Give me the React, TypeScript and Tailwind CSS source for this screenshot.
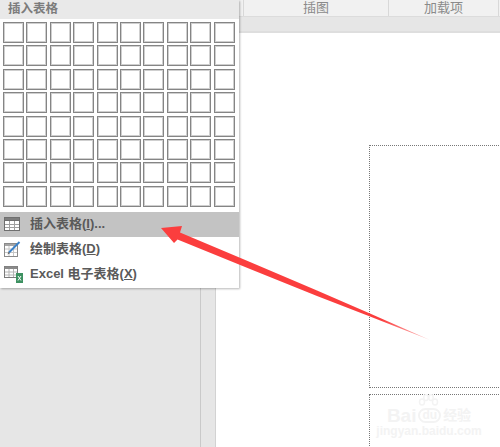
const font = { fontFamily: '"Liberation Sans","Noto Sans CJK SC",sans-serif' };

function TableIcon() {
  return (
    <svg width="17" height="14" viewBox="0 0 17 14" className="shrink-0">
      <rect x="0.5" y="0.5" width="15" height="13" fill="#fff" stroke="#6f6f6f" />
      <rect x="0.5" y="0.5" width="15" height="3" fill="#7d7d7d" stroke="#6f6f6f" />
      <path d="M5.5 4v9M10.5 4v9M1 7.5h14M1 10.5h14" stroke="#a0a0a0" />
    </svg>
  );
}

function DrawIcon() {
  return (
    <svg width="18" height="16" viewBox="0 0 18 16" className="shrink-0">
      <rect x="0.5" y="2.5" width="13" height="13" fill="#fff" stroke="#8a8a8a" />
      <rect x="1" y="3" width="12" height="2" fill="#a5a5a5" />
      <path d="M5 5v10M9.5 5v10M1 8h12M1 11.5h12" stroke="#c6c6c6" />
      <path d="M5 11.5 L15.5 1" stroke="#3b82c9" strokeWidth="2" />
      <path d="M3.5 13.5 L4.5 10.8 L6 12.3 Z" fill="#666" />
    </svg>
  );
}

function ExcelIcon() {
  return (
    <svg width="20" height="17" viewBox="0 0 20 17" className="shrink-0">
      <rect x="0.5" y="0.5" width="13" height="11" fill="#fff" stroke="#7a7a7a" />
      <rect x="0.5" y="0.5" width="13" height="2.5" fill="#8a8a8a" />
      <path d="M5 3v8M9.5 3v8M1 6h12M1 9h12" stroke="#b5b5b5" />
      <rect x="12" y="7" width="7" height="10" fill="#3d9161" />
      <path d="M14 10 L17 14.5 M17 10 L14 14.5" stroke="#fff" strokeWidth="1" />
    </svg>
  );
}

function MenuItem({ icon, label, active }: { icon: React.ReactNode; label: React.ReactNode; active?: boolean }) {
  return (
    <div className={`flex h-[25px] items-center pl-[4px] ${active ? "bg-[#c3c3c3]" : ""}`}>
      <div className="flex w-[26px] shrink-0 items-center">{icon}</div>
      <span className="text-[13px] font-bold text-[#5a5a5a]">{label}</span>
    </div>
  );
}

const rows = Array.from({ length: 8 });
const cols = Array.from({ length: 10 });

export default function App() {
  return (
    <div className="relative flex h-[447px] w-[500px] flex-col overflow-hidden bg-white" style={font}>
      {/* ribbon labels */}
      <div className="flex h-[17px] shrink-0 border-b border-[#dcdcdc] bg-[#f1f1f1] pl-[243px] text-[13px] leading-[15px] text-[#8a8a8a]">
        <div className="flex w-[145px] justify-center border-l border-[#d8d8d8]">插图</div>
        <div className="flex w-[111px] justify-center border-x border-[#d8d8d8]">加载项</div>
      </div>
      {/* ruler strip */}
      <div className="h-[16px] shrink-0 border-b-2 border-[#dedede] bg-[#e6e6e6]" />
      {/* document area */}
      <div className="flex min-h-0 flex-1">
        <div className="w-[201px] shrink-0 border-r border-[#c9c9c9] bg-[#e6e6e6]" />
        <div className="w-[15px] shrink-0 border-r border-[#d2d2d2] bg-[#e6e6e6]" />
        <div className="flex flex-1 flex-col gap-[6px] pl-[153px] pt-[112px]">
          <div className="h-[243px] w-[200px] shrink-0 border border-dotted border-[#777]" />
          <div className="h-[80px] w-[200px] shrink-0 border border-dotted border-[#777]" />
        </div>
      </div>

      {/* watermark */}
      <div className="absolute left-[384px] top-[394px] flex w-[90px] flex-col items-center text-[#f3f3f3]">
        <svg width="22" height="14" viewBox="0 0 22 14" className="ml-[-2px]">
          <g fill="none" stroke="#f3f3f3" strokeWidth="1.5">
            <ellipse cx="5" cy="8" rx="2.5" ry="3" />
            <ellipse cx="9" cy="3.5" rx="2.2" ry="3" />
            <ellipse cx="14" cy="3.5" rx="2.2" ry="3" />
            <ellipse cx="18" cy="8" rx="2.5" ry="3" />
          </g>
        </svg>
        <div className="flex items-center gap-[2px] font-bold leading-none">
          <span className="text-[19px] leading-[15px]">Bai</span>
          <span className="rounded-[8px] border-2 border-[#f3f3f3] px-[2px] text-[12px] leading-[11px]">du</span>
          <span className="text-[14px] leading-[15px]">经验</span>
        </div>
        <div className="mt-[4px] text-[12px] font-bold leading-[8px]">jingyan.baidu.com</div>
      </div>

      {/* dropdown */}
      <div className="absolute left-0 top-0 w-[239px] bg-white shadow-[1px_1px_2px_rgba(0,0,0,0.28)]">
        <div className="flex h-[19px] items-center bg-[#e9e9e9] pl-[8px] text-[12.5px] font-bold text-[#7c7c7c]">插入表格</div>
        <div className="flex flex-col gap-[2.4px] pl-[3px] pt-[3px]">
          {rows.map((_, r) => (
            <div key={r} className="flex gap-[2.4px]">
              {cols.map((_, c) => (
                <div key={c} className="size-[21px] border border-[#858585] bg-white shadow-[inset_0_0_0_1px_#cfcfcf]" />
              ))}
            </div>
          ))}
        </div>
        <div className="pt-[5px]">
          <MenuItem active icon={<TableIcon />} label={<>插入表格(<u>I</u>)...</>} />
          <MenuItem icon={<DrawIcon />} label={<>绘制表格(<u>D</u>)</>} />
          <MenuItem icon={<ExcelIcon />} label={<>Excel 电子表格(<u>X</u>)</>} />
          <div className="h-[1px]" />
        </div>
      </div>

      {/* annotation arrow */}
      <svg className="absolute left-0 top-0" width="500" height="447" viewBox="0 0 500 447">
        <defs>
          <linearGradient id="tail" x1="161" y1="228" x2="430" y2="340" gradientUnits="userSpaceOnUse">
            <stop offset="0.82" stopColor="#fb3e3e" />
            <stop offset="1" stopColor="#fdc4c4" />
          </linearGradient>
        </defs>
        <path
          d="M161 228 L182 226 L180 232.5 L250 262 L317 290.5 L370 313.5 L430 340 L370 316.5 L317 296 L250 269 L177.5 239.5 L174 243 Z"
          fill="url(#tail)"
        />
      </svg>
    </div>
  );
}
